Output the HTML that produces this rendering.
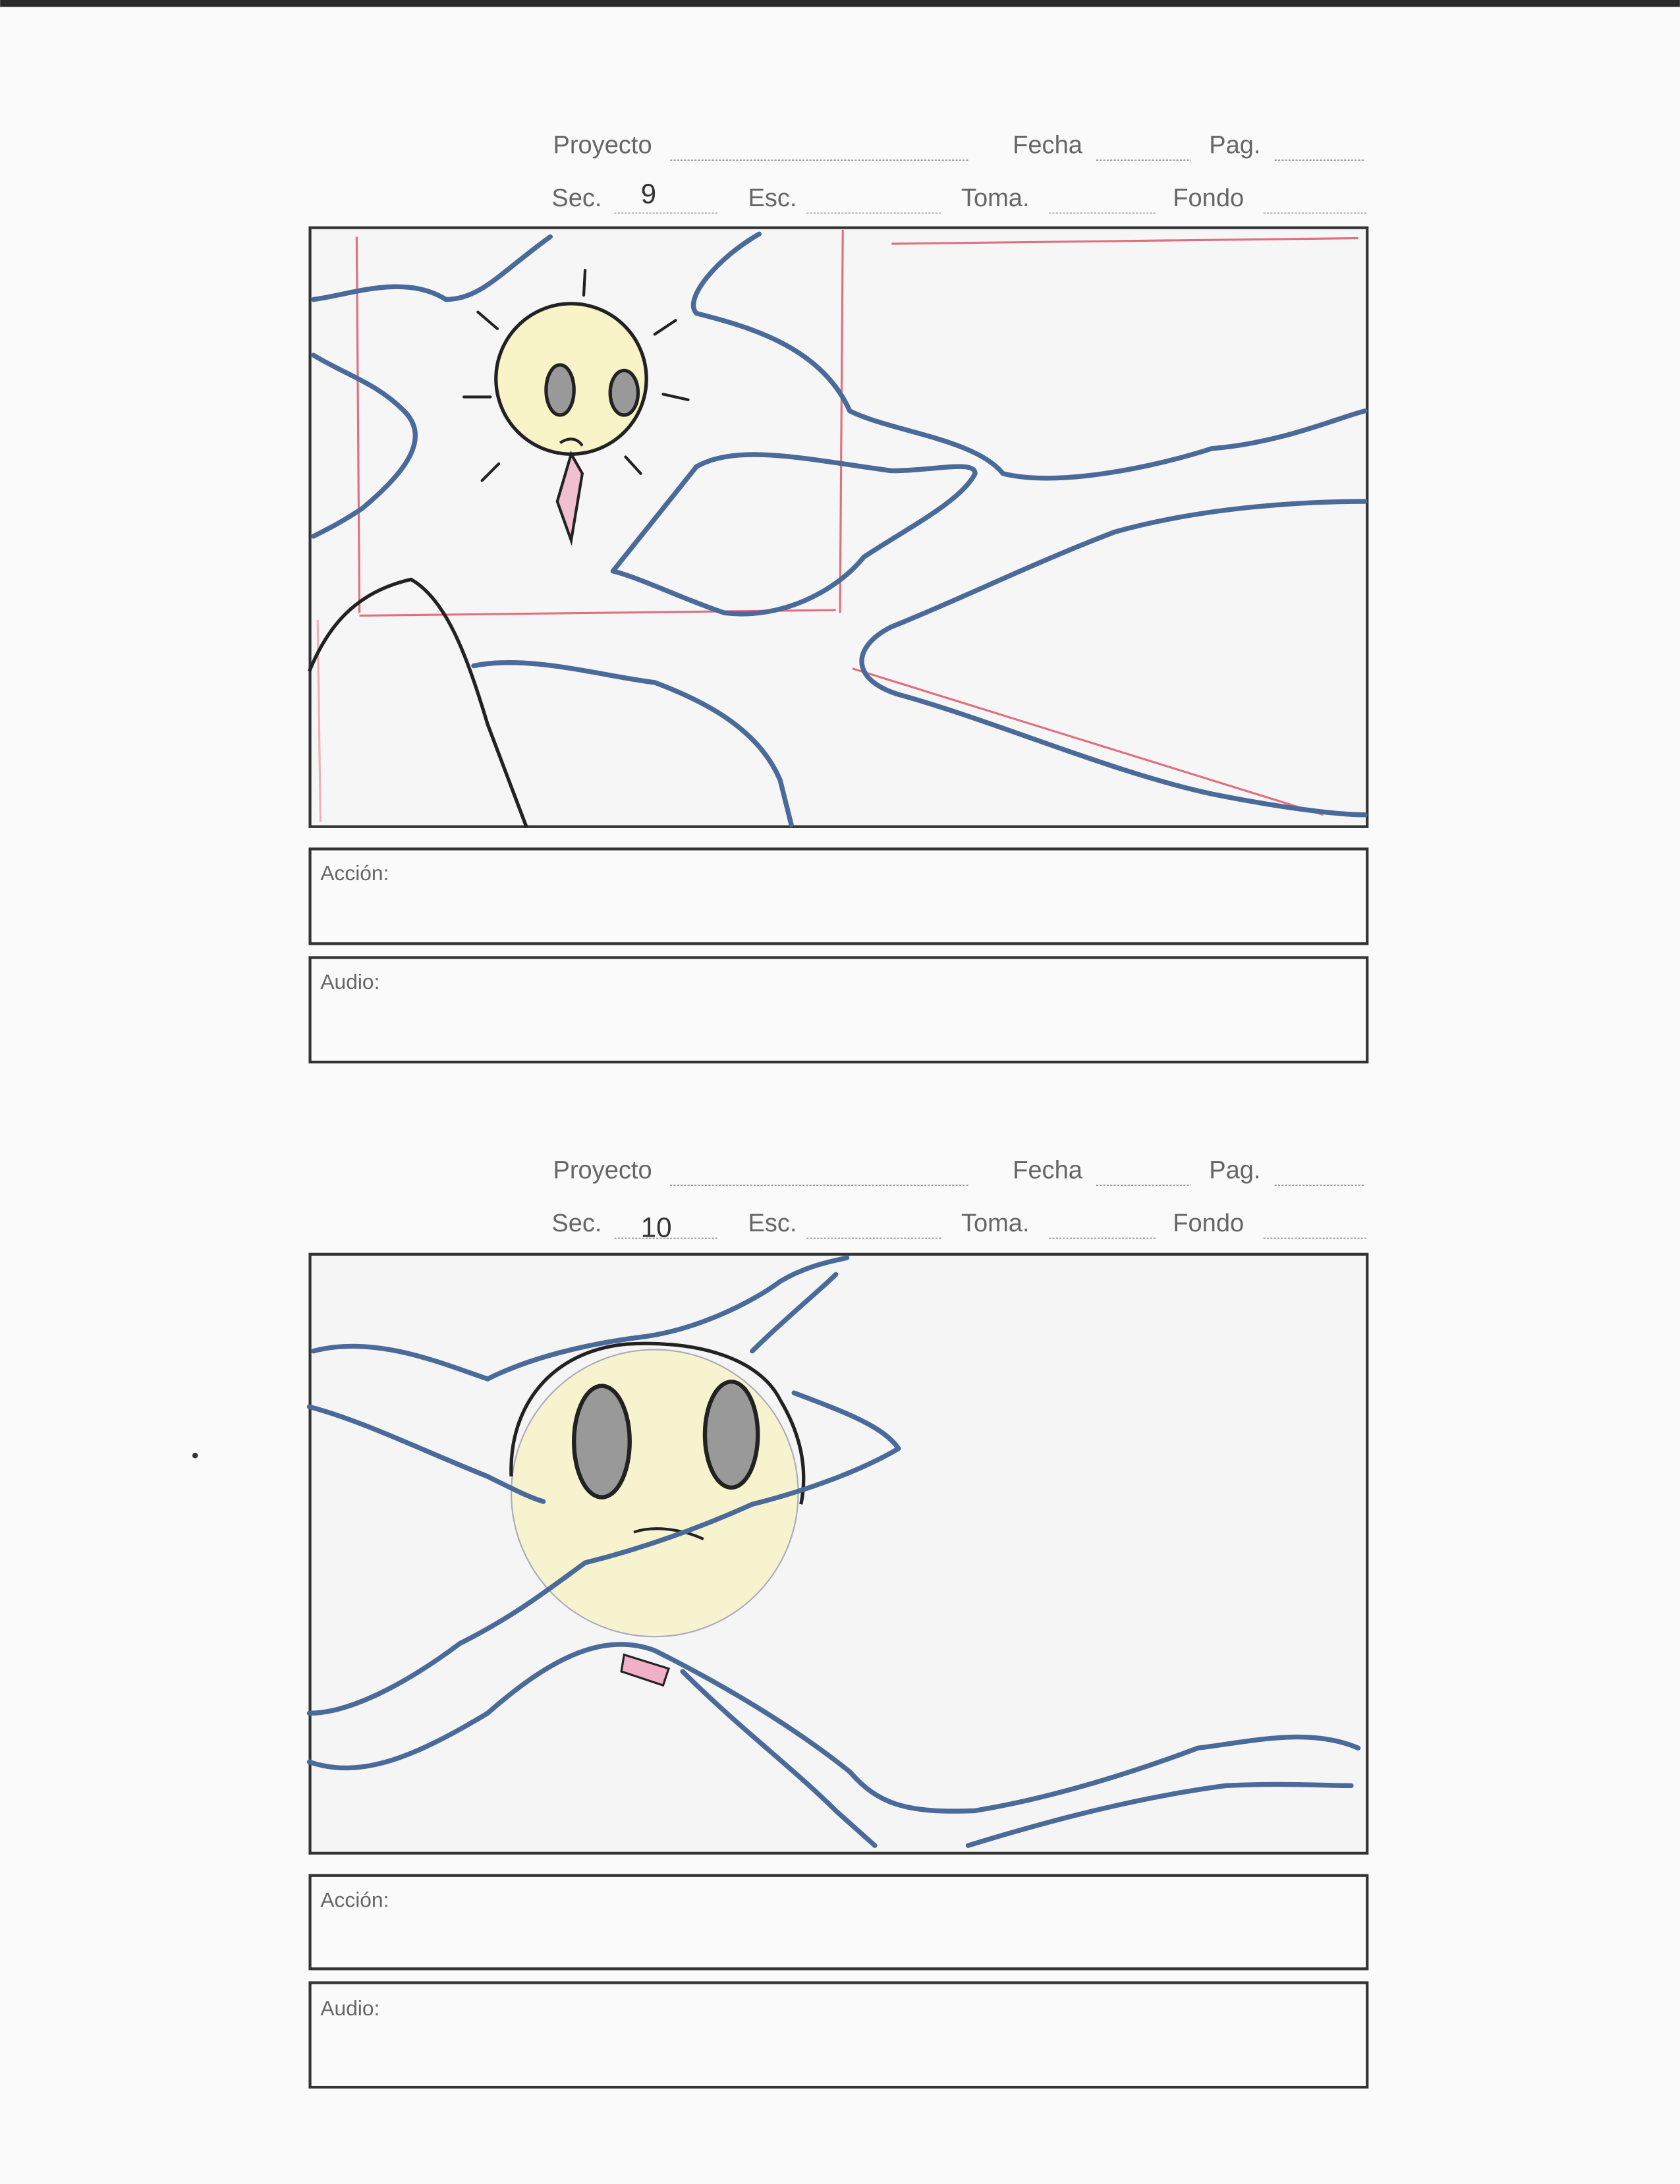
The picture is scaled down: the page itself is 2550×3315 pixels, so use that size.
<!DOCTYPE html>
<html><head><meta charset="utf-8"><style>
html,body{margin:0;padding:0;background:#fbfbfb;}
svg{display:block;}
text{font-family:"Liberation Sans",sans-serif;fill:#666;font-weight:300;}
</style></head><body>
<svg width="2550" height="3315" viewBox="0 0 1206 1568" xmlns="http://www.w3.org/2000/svg">
<rect x="0" y="0" width="1206" height="1568" fill="#fafafa"/>
<rect x="0" y="0" width="1206" height="5" fill="#2a2a2a"/>
<g id="hdr" stroke="#999" stroke-width="0.8" stroke-dasharray="1.5,1">
<line x1="481" y1="115" x2="695" y2="115"/><line x1="787" y1="115" x2="855" y2="115"/><line x1="915" y1="115" x2="980" y2="115"/>
<line x1="441" y1="153" x2="516" y2="153"/><line x1="579" y1="153" x2="676" y2="153"/><line x1="753" y1="153" x2="830" y2="153"/><line x1="907" y1="153" x2="982" y2="153"/>
<line x1="481" y1="851" x2="695" y2="851"/><line x1="787" y1="851" x2="855" y2="851"/><line x1="915" y1="851" x2="980" y2="851"/>
<line x1="441" y1="889" x2="516" y2="889"/><line x1="579" y1="889" x2="676" y2="889"/><line x1="753" y1="889" x2="830" y2="889"/><line x1="907" y1="889" x2="982" y2="889"/>
</g>
<g font-size="18">
<text x="397" y="110">Proyecto</text><text x="727" y="110">Fecha</text><text x="868" y="110">Pag.</text>
<text x="396" y="148">Sec.</text><text x="537" y="148">Esc.</text><text x="690" y="148">Toma.</text><text x="842" y="148">Fondo</text>
<text x="397" y="846">Proyecto</text><text x="727" y="846">Fecha</text><text x="868" y="846">Pag.</text>
<text x="396" y="884">Sec.</text><text x="537" y="884">Esc.</text><text x="690" y="884">Toma.</text><text x="842" y="884">Fondo</text>
</g>
<g font-size="15">
<text x="230" y="632">Acción:</text><text x="230" y="710">Audio:</text>
<text x="230" y="1369">Acción:</text><text x="230" y="1447">Audio:</text>
</g>
<text x="460" y="146" font-size="20" style="fill:#333">9</text>
<text x="460" y="888" font-size="20" style="fill:#333">10</text>
<g fill="none" stroke="#333" stroke-width="2">
<rect x="222.5" y="163.5" width="759" height="430" fill="#f6f6f6"/>
<rect x="222.5" y="609.5" width="759" height="68"/>
<rect x="222.5" y="687.5" width="759" height="75"/>
<rect x="222.5" y="900.5" width="759" height="430" fill="#f5f5f5"/>
<rect x="222.5" y="1346.5" width="759" height="67"/>
<rect x="222.5" y="1423.5" width="759" height="75"/>
</g>
<!-- top drawing -->
<g fill="none" stroke="#e07080" stroke-width="1.5">
<path d="M605 165 L603 440"/><path d="M258 442 L600 438"/><path d="M640 175 L975 171"/><path d="M256 170 L258 440"/><path d="M612 480 L950 585"/>
<path d="M228 445 L230 590" stroke="#f0b0b8"/>
</g>
<g fill="none" stroke="#4a6a9a" stroke-width="3.5" stroke-linecap="round" stroke-linejoin="round">
<path d="M225 215 C250 212 290 196 320 215 C345 215 360 195 395 170"/>
<path d="M225 255 C250 270 270 275 290 295 C310 315 290 340 260 365 C245 375 235 380 225 385"/>
<path d="M545 168 C515 185 490 215 500 225 C540 235 590 250 610 295 C640 310 700 315 720 340 C760 350 830 335 870 322 C920 318 960 300 980 295"/>
<path d="M700 340 C690 360 650 380 620 400 C600 425 560 445 520 440 C490 430 460 415 440 410 C460 385 480 360 500 335 C530 318 580 330 640 338 C670 338 700 330 700 340"/>
<path d="M980 360 C930 360 860 365 800 382 C740 405 690 430 640 450 C610 465 610 490 650 500 C720 520 800 555 870 570 C920 580 960 585 980 585"/>
<path d="M340 478 C380 470 430 485 470 490 C510 505 545 525 560 560 L568 592"/>
</g>
<path d="M222 482 C235 450 255 425 295 416 C320 430 335 470 350 520 L378 594" fill="none" stroke="#222" stroke-width="2.5"/>
<circle cx="410" cy="272" r="54" fill="#f8f4c8" stroke="#222" stroke-width="2.5"/>
<ellipse cx="402" cy="280" rx="10" ry="18" fill="#999" stroke="#222" stroke-width="2.5"/>
<ellipse cx="448" cy="282" rx="10" ry="16" fill="#999" stroke="#222" stroke-width="2.5"/>
<path d="M402 318 C408 314 414 314 418 320" fill="none" stroke="#222" stroke-width="2"/>
<path d="M410 326 L418 340 L410 388 L400 360 Z" fill="#f0c0d0" stroke="#222" stroke-width="2"/>
<g stroke="#222" stroke-width="2" stroke-linecap="round">
<line x1="420" y1="194" x2="419" y2="212"/><line x1="343" y1="224" x2="357" y2="236"/><line x1="485" y1="230" x2="470" y2="240"/>
<line x1="333" y1="285" x2="352" y2="285"/><line x1="476" y1="283" x2="494" y2="287"/><line x1="346" y1="345" x2="358" y2="333"/><line x1="460" y1="340" x2="449" y2="328"/>
</g>
<!-- bottom drawing -->
<circle cx="470" cy="1072" r="103" fill="#f7f3cf" stroke="#aab" stroke-width="1"/>
<path d="M367 1060 C365 1010 395 970 450 965 C500 962 545 975 560 1005 C575 1030 580 1055 575 1080" fill="none" stroke="#222" stroke-width="2.5"/>
<ellipse cx="432" cy="1035" rx="20" ry="40" fill="#999" stroke="#222" stroke-width="3"/>
<ellipse cx="525" cy="1030" rx="19" ry="38" fill="#999" stroke="#222" stroke-width="3"/>
<path d="M455 1100 C470 1095 490 1098 505 1105" fill="none" stroke="#222" stroke-width="2"/>
<path d="M448 1188 L480 1198 L476 1210 L446 1200 Z" fill="#f0b0c8" stroke="#222" stroke-width="1.5"/>
<g fill="none" stroke="#4a6a9a" stroke-width="3.5" stroke-linecap="round" stroke-linejoin="round">
<path d="M225 970 C270 958 320 980 350 990 C380 975 420 965 460 960 C500 955 540 935 560 920 C580 908 600 905 608 903"/>
<path d="M540 970 C560 950 590 925 600 915"/>
<path d="M222 1010 C260 1020 300 1040 350 1060 C370 1070 380 1075 390 1078"/>
<path d="M570 1000 C610 1015 635 1025 645 1040 C620 1055 580 1070 540 1080 C500 1098 460 1112 420 1122 C395 1140 370 1160 330 1180 C290 1210 250 1230 222 1230"/>
<path d="M222 1265 C260 1278 300 1260 350 1230 C390 1195 430 1170 470 1185 C520 1210 570 1240 610 1272 C630 1295 650 1302 700 1300 C760 1290 820 1270 860 1255 C900 1250 940 1240 975 1255"/>
<path d="M490 1200 C530 1240 570 1270 600 1300 L628 1325"/>
<path d="M695 1325 C760 1305 820 1290 880 1282 C920 1280 950 1282 970 1282"/>
</g>
<circle cx="140" cy="1045" r="2" fill="#333"/>
</svg>
</body></html>
